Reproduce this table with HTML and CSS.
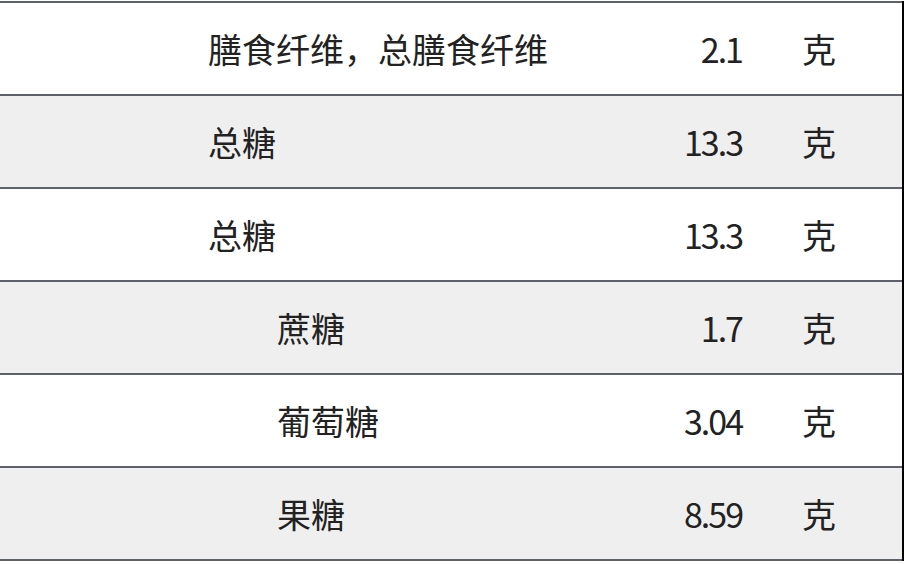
FILE: index.html
```html
<!DOCTYPE html>
<html lang="zh-CN">
<head>
<meta charset="utf-8">
<title>营养成分</title>
<link rel="stylesheet" href="styles.css">
</head>
<body>
<div class="table">
  <div class="row">
    <div class="name">膳食纤维，总膳食纤维</div>
    <div class="num">2.1</div>
    <div class="unit">克</div>
  </div>
  <div class="row alt">
    <div class="name">总糖</div>
    <div class="num">13.3</div>
    <div class="unit">克</div>
  </div>
  <div class="row">
    <div class="name">总糖</div>
    <div class="num">13.3</div>
    <div class="unit">克</div>
  </div>
  <div class="row alt">
    <div class="name sub">蔗糖</div>
    <div class="num">1.7</div>
    <div class="unit">克</div>
  </div>
  <div class="row">
    <div class="name sub">葡萄糖</div>
    <div class="num">3.04</div>
    <div class="unit">克</div>
  </div>
  <div class="row alt last">
    <div class="name sub">果糖</div>
    <div class="num">8.59</div>
    <div class="unit">克</div>
  </div>
</div>
</body>
</html>
```
FILE: styles.css
```css
html, body {
  margin: 0;
  padding: 0;
  background: #ffffff;
}
body {
  padding-top: 1px;
  font-family: "Noto Sans CJK SC", "Noto Sans", sans-serif;
  font-size: 34px;
  color: #222222;
}
.table {
  width: 902px;
  border-right: 2px solid #000000;
}
.row {
  display: grid;
  grid-template-columns: 1fr 120px 160px;
  align-items: center;
  height: 91px;
  border-top: 2px solid #5d616b;
  background: #ffffff;
}
.row.alt {
  background: #efefef;
}
.row.last {
  border-bottom: 2px solid #5d616b;
}
.name {
  padding-left: 208px;
  white-space: nowrap;
}
.name.sub {
  padding-left: 277px;
}
.num {
  text-align: right;
  letter-spacing: -2px;
  padding-right: 0;
}
.unit {
  padding-left: 60px;
}
```
